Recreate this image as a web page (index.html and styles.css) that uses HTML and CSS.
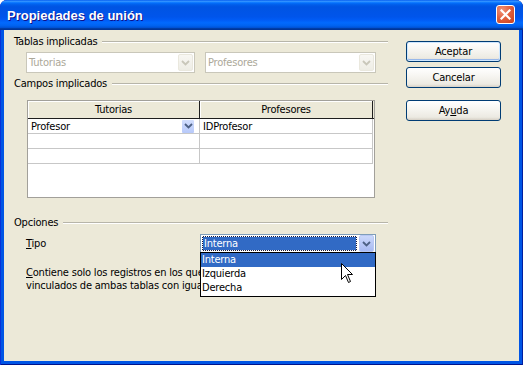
FILE: index.html
```html
<!DOCTYPE html>
<html lang="es">
<head>
<meta charset="utf-8">
<title>Propiedades de unión</title>
<link rel="stylesheet" href="styles.css">
</head>
<body>
<div class="window">
  <div class="titlebar">
    <span class="title">Propiedades de unión</span>
    <span class="close" aria-label="Cerrar">
      <svg width="11" height="11" viewBox="0 0 11 11"><path d="M1.5 1.5 L9.5 9.5 M9.5 1.5 L1.5 9.5" stroke="#fff" stroke-width="2.2" stroke-linecap="square"/></svg>
    </span>
  </div>
  <div class="client">
    <div class="main">
      <div class="group-head"><span>Tablas implicadas</span><i class="sep"></i></div>
      <div class="tables-row">
        <div class="combo disabled w1">
          <span class="combo-text">Tutorias</span>
          <span class="combo-btn"><svg width="9" height="6" viewBox="0 0 9 6"><path d="M1 1 L4.5 4.5 L8 1" fill="none" stroke="currentColor" stroke-width="1.8"/></svg></span>
        </div>
        <div class="combo disabled w2">
          <span class="combo-text">Profesores</span>
          <span class="combo-btn"><svg width="9" height="6" viewBox="0 0 9 6"><path d="M1 1 L4.5 4.5 L8 1" fill="none" stroke="currentColor" stroke-width="1.8"/></svg></span>
        </div>
      </div>
      <div class="group-head g2"><span>Campos implicados</span><i class="sep"></i></div>
      <div class="grid">
        <div class="grid-head">
          <div class="hcell c1">Tutorias</div>
          <div class="hcell c2">Profesores</div>
        </div>
        <div class="grid-row">
          <div class="cell c1"><span class="cell-text">Profesor</span><span class="mini-btn"><svg width="9" height="6" viewBox="0 0 9 6"><path d="M1 1 L4.5 4.5 L8 1" fill="none" stroke="currentColor" stroke-width="1.8"/></svg></span></div>
          <div class="cell c2"><span class="cell-text">IDProfesor</span></div>
        </div>
        <div class="grid-row">
          <div class="cell c1"></div>
          <div class="cell c2"></div>
        </div>
        <div class="grid-row">
          <div class="cell c1"></div>
          <div class="cell c2"></div>
        </div>
      </div>
      <div class="group-head g3"><span>Opciones</span><i class="sep"></i></div>
      <div class="tipo-row">
        <span class="tipo-label"><u>T</u>ipo</span>
        <div class="combo active">
          <span class="combo-text sel">Interna</span>
          <span class="combo-btn blue"><svg width="9" height="6" viewBox="0 0 9 6"><path d="M1 1 L4.5 4.5 L8 1" fill="none" stroke="currentColor" stroke-width="1.8"/></svg></span>
          <ul class="dropdown">
            <li class="sel">Interna</li>
            <li>Izquierda</li>
            <li>Derecha</li>
          </ul>
          <svg class="cursor" width="13" height="21" viewBox="0 0 13 21"><path d="M0.5 0.5 L0.5 16.5 L4.5 12.5 L7.5 19.5 L9.5 18.5 L6.5 11.5 L11.5 11.5 Z" fill="#fff" stroke="#000" stroke-width="1" stroke-linejoin="miter"/></svg>
        </div>
      </div>
      <p class="desc"><u>C</u>ontiene solo los registros en los que los campos<br>vinculados de ambas tablas con iguales.</p>
    </div>
    <div class="buttons">
      <span class="btn default">Aceptar</span>
      <span class="btn">Cancelar</span>
      <span class="btn help">Ay<u>u</u>da</span>
    </div>
  </div>
</div>
</body>
</html>
```

FILE: styles.css
```css
* { box-sizing: border-box; }
html, body { margin: 0; padding: 0; }
body {
  width: 523px;
  height: 365px;
  overflow: hidden;
  background: #fff;
  font-family: "DejaVu Sans Condensed", "DejaVu Sans", sans-serif;
  font-size: 11px;
  letter-spacing: -0.2px;
  color: #000;
}
.window {
  width: 523px;
  height: 365px;
  display: flex;
  flex-direction: column;
  background: #0055E5;
  border-radius: 7px 7px 0 0;
  box-shadow: inset 1px 0 #0831D9, inset -1px 0 #001EA0, inset 0 -1px #00138C;
  overflow: hidden;
}
.titlebar {
  height: 30px;
  flex: none;
  display: flex;
  align-items: flex-start;
  justify-content: space-between;
  padding: 0 8px 0 7px;
  background: linear-gradient(to bottom, #0058EE 0%, #3593FF 4%, #288EFF 6%, #127DFF 8%, #036FFC 10%, #0262EE 14%, #0057E5 20%, #0054E3 24%, #0055EB 56%, #005BF5 66%, #026AFE 76%, #0062EF 86%, #0052D6 92%, #0040AB 94%, #003092 100%);
  border-radius: 7px 7px 0 0;
}
.title {
  margin-top: 8px;
  color: #fff;
  font-family: "Liberation Sans", Arial, sans-serif;
  font-weight: bold;
  font-size: 13px;
  line-height: 15px;
  letter-spacing: 0;
  text-shadow: 1px 1px 0 #0F1089;
}
.close {
  margin-top: 5px;
  width: 19px;
  height: 19px;
  display: flex;
  align-items: center;
  justify-content: center;
  border: 1px solid #fff;
  border-radius: 3px;
  background: radial-gradient(circle at 30% 25%, #F0937A 0%, #E2613F 45%, #C8401B 100%);
}
.client {
  flex: 1;
  margin: 0 4px 4px 4px;
  background: #ECE9D8;
  display: flex;
  padding-left: 10px;
}
.main {
  width: 374px;
  padding-top: 5px;
  display: flex;
  flex-direction: column;
}
.group-head {
  display: flex;
  align-items: center;
  height: 13px;
  line-height: 13px;
  white-space: nowrap;
}
.sep {
  flex: 1;
  margin-left: 5px;
  height: 2px;
  border-top: 1px solid #B7B5A9;
  border-bottom: 1px solid #FFFFFF;
}
.tables-row {
  display: flex;
  margin-top: 4px;
  padding-left: 12px;
  gap: 10px;
}
.combo {
  position: relative;
  display: flex;
  align-items: stretch;
  height: 21px;
  border: 1px solid #C9C7BA;
  background: #fff;
}
.combo.w1 { width: 169px; }
.combo.w2 { width: 171px; }
.combo-text {
  flex: 1;
  display: flex;
  align-items: center;
  padding-left: 2px;
  white-space: nowrap;
}
.combo.disabled .combo-text { color: #ACA899; }
.combo-btn {
  width: 15px;
  margin: 1px;
  display: flex;
  align-items: center;
  justify-content: center;
  border-radius: 2px;
}
.combo.disabled .combo-btn {
  color: #C9C7BA;
  background: linear-gradient(to bottom, #F8F7F3, #EEEDE5);
  border: 1px solid #EAE8DE;
}
.g2 { margin-top: 4px; }
.grid {
  margin-top: 10px;
  margin-left: 13px;
  width: 348px;
  height: 98px;
  border: 1px solid #A2A09A;
  background: #fff;
}
.grid-head {
  display: flex;
  height: 18px;
  background: #ECE9D8;
  border-bottom: 1px solid #1E1E1E;
}
.hcell {
  display: flex;
  align-items: center;
  justify-content: center;
  border-right: 1px solid #1E1E1E;
  box-shadow: inset 1px 1px #fff;
}
.c1 { width: 172px; }
.c2 { width: 173px; }
.grid-row {
  display: flex;
  height: 15px;
}
.cell {
  display: flex;
  align-items: center;
  border-right: 1px solid #C7C7C7;
  border-bottom: 1px solid #C7C7C7;
}
.cell-text {
  flex: 1;
  padding-left: 3px;
  white-space: nowrap;
}
.mini-btn {
  width: 12px;
  height: 13px;
  margin-right: 5px;
  display: flex;
  align-items: center;
  justify-content: center;
  color: #4D6185;
  background: linear-gradient(to bottom, #D2DEFD, #B7C9FA);
  border-radius: 1px;
}
.g3 { margin-top: 18px; }
.tipo-row {
  display: flex;
  align-items: center;
  margin-top: 5px;
  padding-left: 12px;
}
.tipo-label {
  width: 174px;
  line-height: 13px;
}
.combo.active {
  width: 176px;
  height: 19px;
  border-color: #7F9DB9;
}
.combo-text.sel {
  margin: 1px 2px 1px 1px;
  background: #316AC5;
  color: #fff;
  border: 1px solid #1A1A3A;
  outline: 1px dotted #fff;
  outline-offset: -1px;
  padding-left: 1px;
}
.combo-btn.blue {
  color: #4D6185;
  margin: 0 1px 0 0;
  background: linear-gradient(to bottom, #CBD8FB, #A8BAF2);
  border: 1px solid #B9C8F4;
}
.dropdown {
  position: absolute;
  z-index: 2;
  top: 100%;
  left: -1px;
  width: 176px;
  margin: 0;
  padding: 0 0 1px 0;
  list-style: none;
  background: #fff;
  border: 1px solid #000;
}
.dropdown li {
  height: 14px;
  line-height: 14px;
  padding-left: 1px;
}
.dropdown li.sel {
  background: #316AC5;
  color: #fff;
}
.cursor {
  position: absolute;
  z-index: 3;
  left: 140px;
  top: 28px;
}
.desc {
  margin: 13px 0 0 0;
  padding-left: 12px;
  line-height: 13px;
  white-space: nowrap;
}
.buttons {
  margin-left: 18px;
  margin-top: 11px;
  width: 95px;
  display: flex;
  flex-direction: column;
}
.btn {
  display: flex;
  align-items: center;
  justify-content: center;
  height: 21px;
  border: 1px solid #003C74;
  border-radius: 3px;
  background: linear-gradient(to bottom, #FFFFFF 0%, #F7F6F2 40%, #ECEAE2 85%, #D6D0C5 100%);
}
.btn + .btn { margin-top: 5px; }
.btn.default {
  box-shadow: inset 0 0 0 1px #CEE7FF, inset 0 -1px 0 1px #98B8EA;
}
.btn.help { margin-top: 12px; }
```
